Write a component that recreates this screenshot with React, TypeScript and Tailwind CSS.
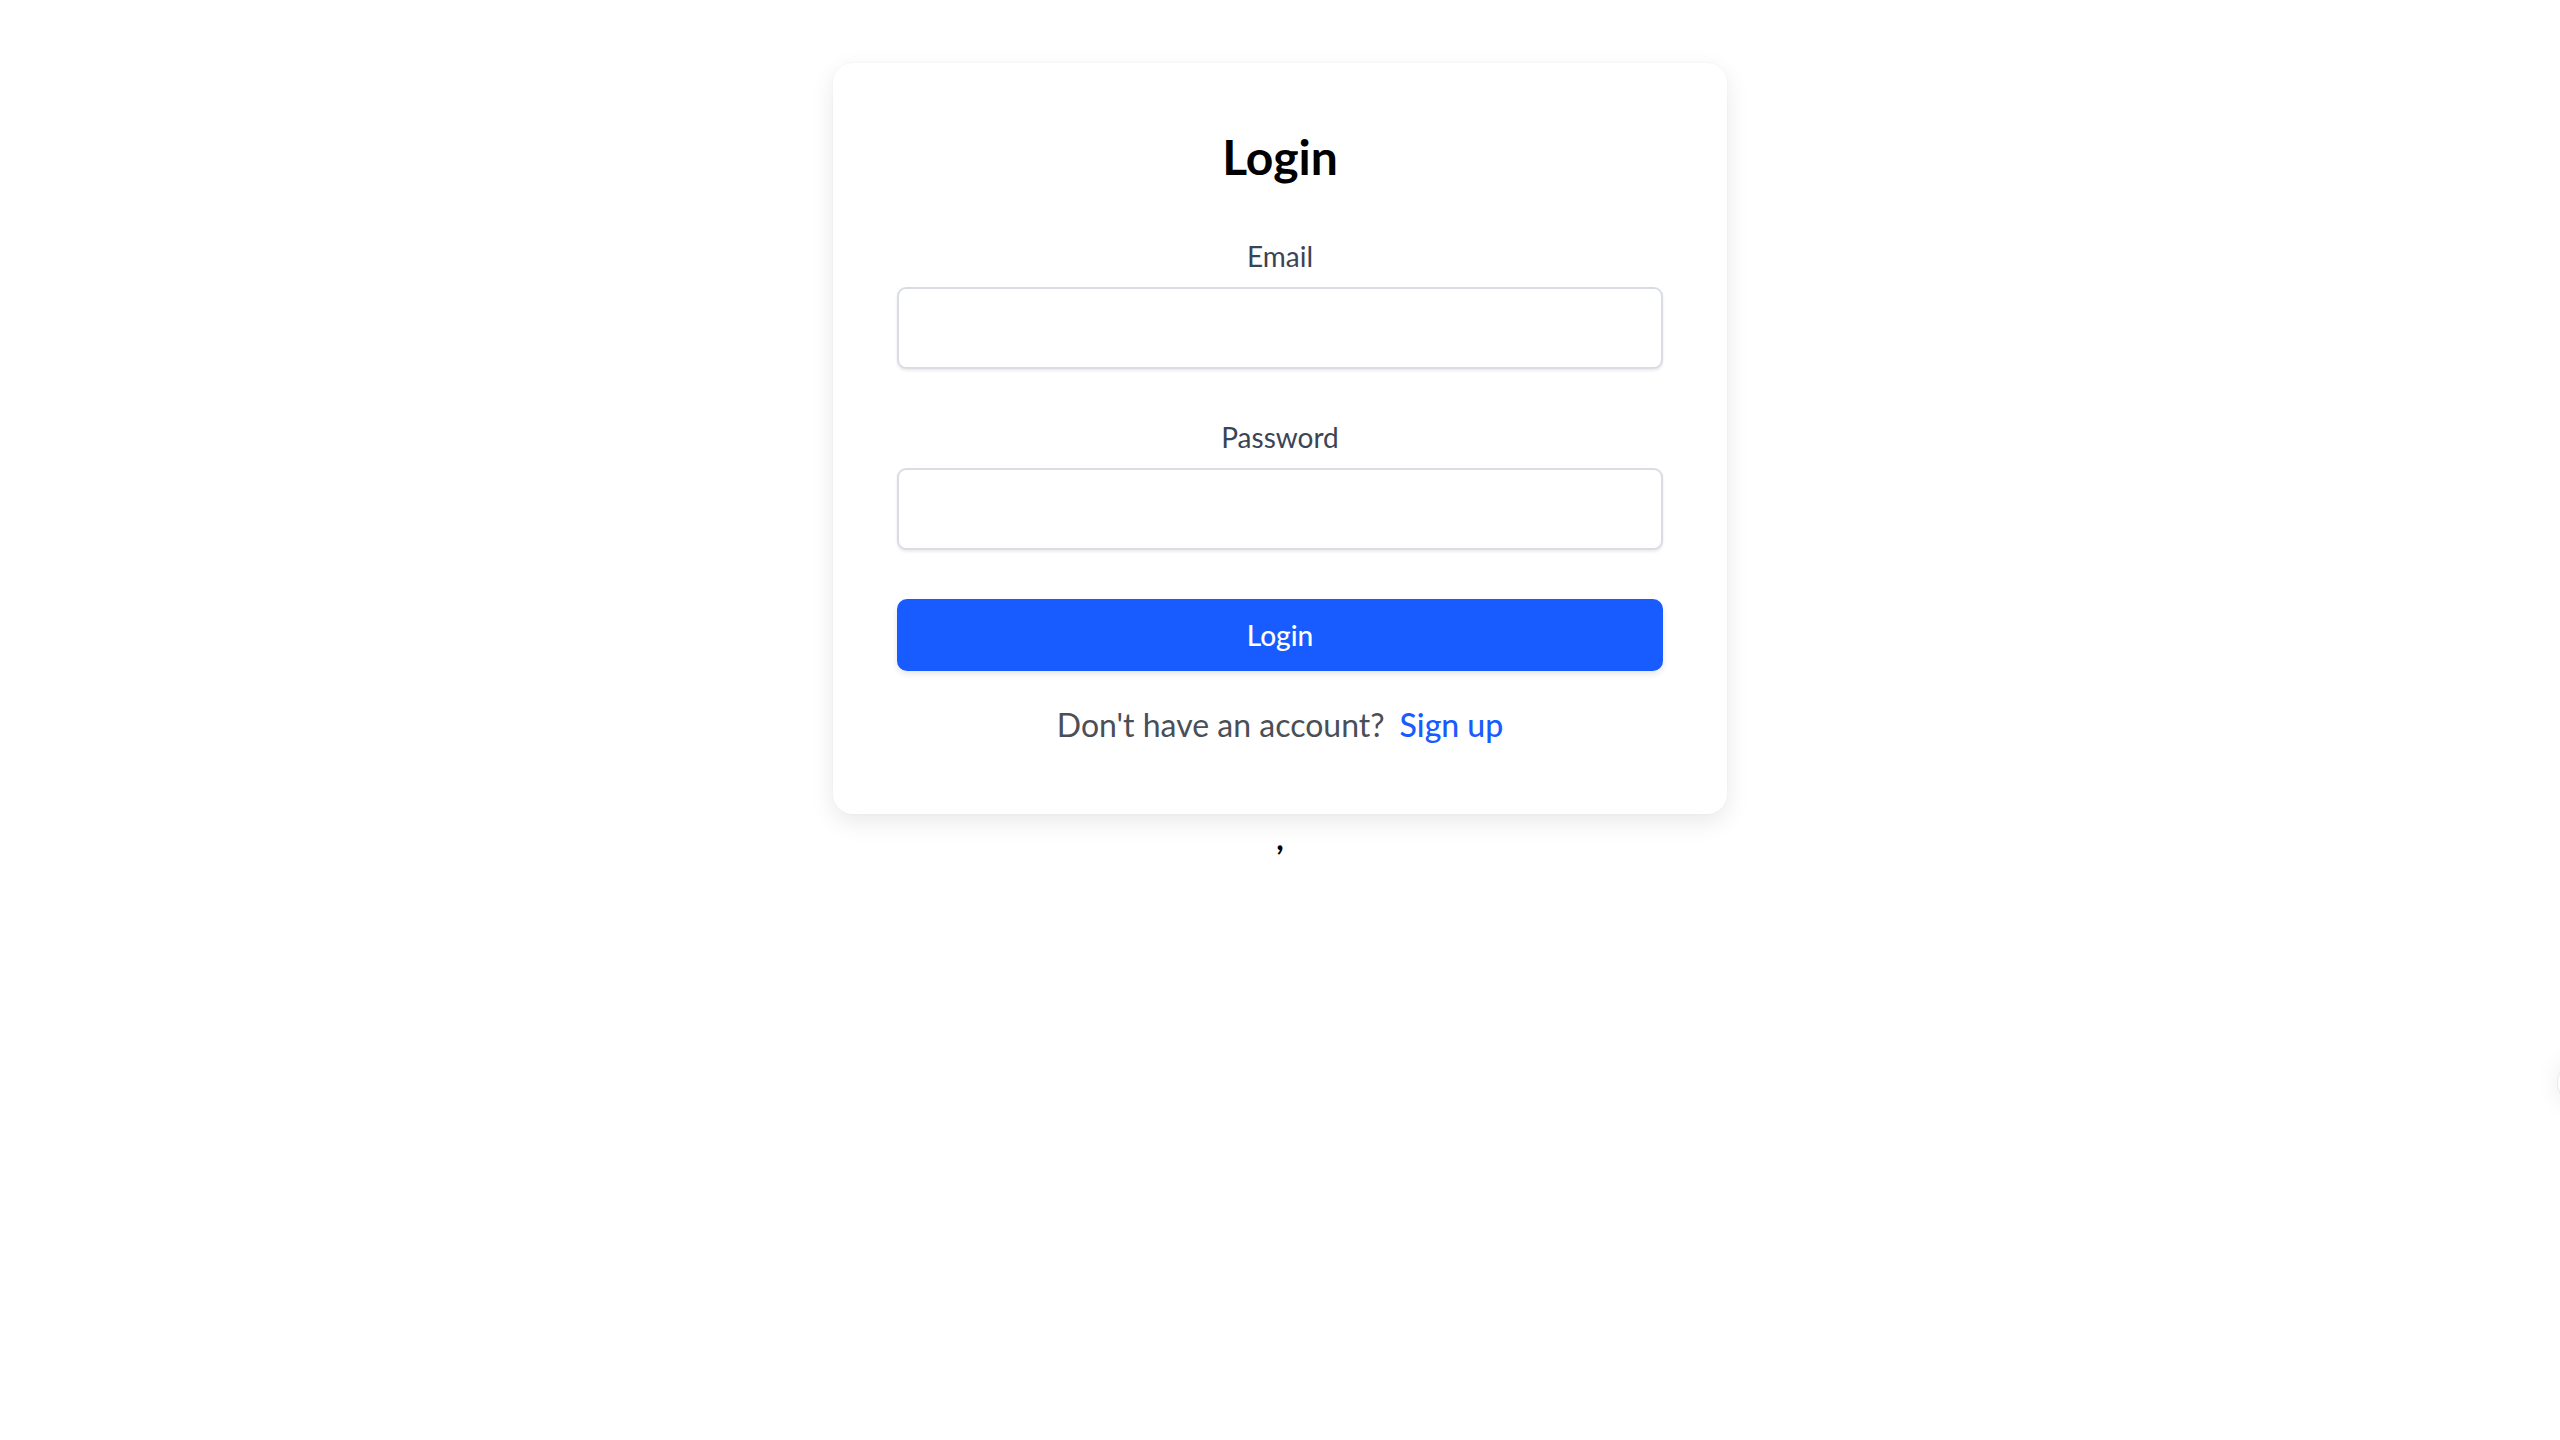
import React from "react";

export default function App() {
  return (
    <div className="min-h-screen bg-white" style={{ fontFamily: "Lato, 'Noto Sans', sans-serif" }}>
      <div className="pt-[63px]">
        <div className="mx-auto w-[894px] rounded-[20px] bg-white px-16 pt-[62px] pb-[67px] shadow-[0_8px_24px_rgba(0,0,0,0.09),0_0_3px_rgba(0,0,0,0.04)]">
          <h1 className="text-center text-[48px] font-bold leading-[64px] text-black">Login</h1>

          <div className="mt-[49px]">
            <label className="block text-center text-[28px] leading-[36px] text-[#3b4456]">Email</label>
            <input
              type="email"
              className="mt-[13px] block h-[82px] w-full rounded-[9px] border-2 border-[#d9dde3] bg-white px-4 shadow-[0_2px_3px_rgba(0,0,0,0.08)] outline-none"
            />
          </div>

          <div className="mt-[50px]">
            <label className="block text-center text-[28px] leading-[36px] text-[#3b4456]">Password</label>
            <input
              type="password"
              className="mt-[13px] block h-[82px] w-full rounded-[9px] border-2 border-[#d9dde3] bg-white px-4 shadow-[0_2px_3px_rgba(0,0,0,0.08)] outline-none"
            />
          </div>

          <button className="mt-[49px] block h-[72px] w-full rounded-[10px] bg-[#185cff] text-[28px] font-medium leading-[36px] text-white shadow-[0_3px_6px_rgba(0,0,0,0.1)]">
            Login
          </button>

          <p className="mt-[32px] text-center text-[32px] leading-[44px] text-[#4a4f57]">
            Don't have an account?<span className="ml-[15px] font-medium text-[#185cff]">Sign up</span>
          </p>
        </div>
        <div className="mt-[8px] text-center text-[32px] font-bold leading-[32px] text-black">,</div>
      </div>
      <div className="fixed left-[2557px] top-[1059px] h-12 w-12 rounded-full border border-[#e5e7eb] bg-white shadow-[0_0_24px_rgba(0,0,0,0.08)]" />
    </div>
  );
}
